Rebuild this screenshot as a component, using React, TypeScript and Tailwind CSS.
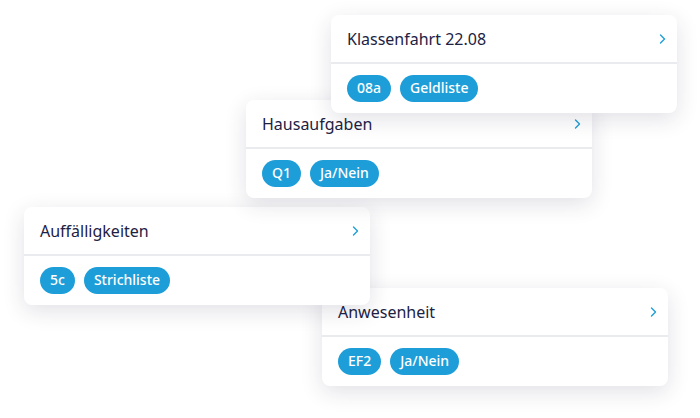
import React from "react";

type CardProps = {
  title: string;
  chips: string[];
  className: string;
};

function Chevron() {
  return (
    <svg width="8" height="10" viewBox="0 0 8 10" fill="none">
      <path d="M2.5 1 L6.5 5 L2.5 9" stroke="#1e9ed8" strokeWidth="1.4" strokeLinecap="round" strokeLinejoin="round" />
    </svg>
  );
}

function Card({ title, chips, className }: CardProps) {
  return (
    <div
      className={
        "absolute w-[346px] h-[98px] rounded-[8px] bg-white shadow-[0_6px_22px_rgba(40,45,80,0.14)] flex flex-col " +
        className
      }
    >
      <div className="h-[47px] flex items-center justify-between pl-[16px] pr-[11px] pt-[1px]">
        <span className="text-[16px] text-[#1d2243] leading-none">{title}</span>
        <Chevron />
      </div>
      <div className="h-[2px] bg-[#e9ebef]" />
      <div className="flex-1 flex items-center gap-[9px] px-[16px] pb-[1px]">
        {chips.map((c) => (
          <span
            key={c}
            className="h-[27px] px-[10px] rounded-full bg-[#1e9ed8] text-white text-[14px] font-medium flex items-center leading-none"
          >
            {c}
          </span>
        ))}
      </div>
    </div>
  );
}

export default function App() {
  return (
    <div
      className="relative w-[700px] h-[418px] bg-white overflow-hidden"
      style={{ fontFamily: '"Noto Sans", "Open Sans", sans-serif' }}
    >
      <Card title="Anwesenheit" chips={["EF2", "Ja/Nein"]} className="left-[322px] top-[288px]" />
      <Card title="Auffälligkeiten" chips={["5c", "Strichliste"]} className="left-[24px] top-[207px]" />
      <Card title="Hausaufgaben" chips={["Q1", "Ja/Nein"]} className="left-[246px] top-[100px]" />
      <Card title="Klassenfahrt 22.08" chips={["08a", "Geldliste"]} className="left-[331px] top-[15px]" />
    </div>
  );
}
